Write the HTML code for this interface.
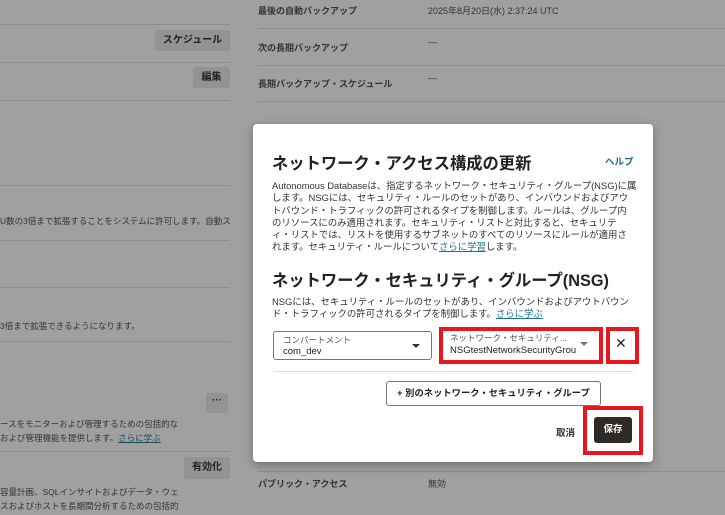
<!DOCTYPE html><html><head><meta charset="utf-8"><style>
*{margin:0;padding:0;box-sizing:border-box}
body{width:725px;height:515px;background:#a0a0a0;font-family:"Liberation Sans","Noto Sans CJK JP",sans-serif;color:#2a2a2a;position:relative;overflow:hidden}
.a{position:absolute;white-space:nowrap}
.ln{position:absolute;height:1px;background:#8e8e8e}
.bt{position:absolute;background:#939393;border-radius:3px;font-size:10px;font-weight:bold;color:#222;text-align:center}
.s{font-size:9px;color:#333}
.b{font-weight:bold}
#m{position:absolute;left:253px;top:124px;width:400px;height:338px;background:#fff;border-radius:4px;box-shadow:0 3px 10px rgba(0,0,0,.3)}
.red{position:absolute;border:4px solid #e8161f}
a{color:#1f6f8b;text-decoration:underline}
.p{font-size:9.4px;line-height:12.3px;color:#333}
</style></head><body>
<div class="ln" style="left:0;top:24px;width:230px"></div>
<div class="ln" style="left:0;top:62px;width:230px"></div>
<div class="ln" style="left:0;top:100px;width:230px"></div>
<div class="ln" style="left:0;top:185px;width:230px"></div>
<div class="ln" style="left:0;top:240px;width:230px"></div>
<div class="ln" style="left:0;top:287px;width:230px"></div>
<div class="ln" style="left:0;top:341px;width:230px"></div>
<div class="ln" style="left:0;top:451px;width:230px"></div>
<div class="bt" style="left:155px;top:30px;width:75px;height:21px;line-height:21px">スケジュール</div>
<div class="bt" style="left:193px;top:67px;width:37px;height:21px;line-height:21px">編集</div>
<div class="bt" style="left:206px;top:393px;width:22px;height:20px;line-height:16px">···</div>
<div class="bt" style="left:184px;top:457px;width:46px;height:22px;line-height:22px">有効化</div>
<div class="a s" style="left:0;top:215px;font-size:8.5px">U数の3倍まで拡張することをシステムに許可します。自動ス</div>
<div class="a s" style="left:0;top:320px;font-size:8.5px">3倍まで拡張できるようになります。</div>
<div class="a s" style="left:0;top:418px;font-size:8.5px">ースをモニターおよび管理するための包括的な</div>
<div class="a s" style="left:0;top:432px;font-size:8.5px">および管理機能を提供します。<a style="color:#1d4a5a">さらに学ぶ</a></div>
<div class="a s" style="left:0;top:486px;font-size:8.5px">容量計画、SQLインサイトおよびデータ・ウェ</div>
<div class="a s" style="left:0;top:500px;font-size:8.5px">スおよびホストを長期間分析するための包括的</div>
<div class="ln" style="left:258px;top:28px;width:467px"></div>
<div class="ln" style="left:258px;top:65px;width:467px"></div>
<div class="ln" style="left:258px;top:101px;width:467px"></div>
<div class="ln" style="left:258px;top:471px;width:467px"></div>
<div class="a s b" style="left:258px;top:4px">最後の自動バックアップ</div>
<div class="a s" style="left:428px;top:4px">2025年8月20日(水) 2:37:24 UTC</div>
<div class="a s b" style="left:258px;top:41px">次の長期バックアップ</div>
<div class="a s" style="left:428px;top:37px">—</div>
<div class="a s b" style="left:258px;top:77px">長期バックアップ・スケジュール</div>
<div class="a s" style="left:428px;top:73px">—</div>
<div class="a s b" style="left:258px;top:477px">パブリック・アクセス</div>
<div class="a s" style="left:428px;top:477px">無効</div>
<div id="m">
<div class="a b" style="left:19px;top:26px;font-size:16.3px;color:#222">ネットワーク・アクセス構成の更新</div>
<div class="a b" style="left:352px;top:30px;font-size:9.5px;color:#1f6f8b">ヘルプ</div>
<div class="a p" style="left:19px;top:56px">Autonomous Databaseは、指定するネットワーク・セキュリティ・グループ(NSG)に属<br>します。NSGには、セキュリティ・ルールのセットがあり、インバウンドおよびアウ<br>トバウンド・トラフィックの許可されるタイプを制御します。ルールは、グループ内<br>のリソースにのみ適用されます。セキュリティ・リストと対比すると、セキュリテ<br>ィ・リストでは、リストを使用するサブネットのすべてのリソースにルールが適用さ<br>れます。セキュリティ・ルールについて<a>さらに学習</a>します。</div>
<div class="a b" style="left:19px;top:143px;font-size:16.3px;color:#222">ネットワーク・セキュリティ・グループ(NSG)</div>
<div class="a p" style="left:19px;top:172px">NSGには、セキュリティ・ルールのセットがあり、インバウンドおよびアウトバウン<br>ド・トラフィックの許可されるタイプを制御します。<a>さらに学ぶ</a></div>
<div class="a" style="left:20px;top:207px;width:159px;height:29px;border:1px solid #777;border-radius:3px">
<div class="a" style="left:9px;top:2px;font-size:8.5px;color:#555">コンパートメント</div>
<div class="a" style="left:9px;top:14px;font-size:9.5px;color:#222">com_dev</div>
<div class="a" style="left:138px;top:12px;border:4px solid transparent;border-top:4px solid #333"></div></div>
<div class="red" style="left:186px;top:203px;width:164px;height:37px"></div>
<div class="a" style="left:197px;top:208px;font-size:8.5px;color:#555">ネットワーク・セキュリティ...</div>
<div class="a" style="left:197px;top:221px;font-size:9.5px;color:#222">NSGtestNetworkSecurityGrou</div>
<div class="a" style="left:327px;top:218px;border:4px solid transparent;border-top:4px solid #777"></div>
<div class="red" style="left:353px;top:203px;width:33px;height:37px"></div>
<div class="a" style="left:362px;top:211px;font-size:14px;color:#222">✕</div>
<div class="a" style="left:20px;top:247px;width:360px;height:1px;background:#ddd"></div>
<div class="a b" style="left:133px;top:257px;width:215px;height:25px;border:1px solid #777;border-radius:3px;font-size:9.3px;line-height:23px;text-align:center;color:#222">+ 別のネットワーク・セキュリティ・グループ</div>
<div class="a b" style="left:303px;top:301px;font-size:9.5px;color:#333">取消</div>
<div class="red" style="left:330px;top:282px;width:60px;height:49px"></div>
<div class="a b" style="left:341px;top:293px;width:38px;height:26px;background:#2e2a27;border-radius:3px;color:#fff;font-size:9.5px;line-height:26px;text-align:center">保存</div>
</div>
</body></html>
